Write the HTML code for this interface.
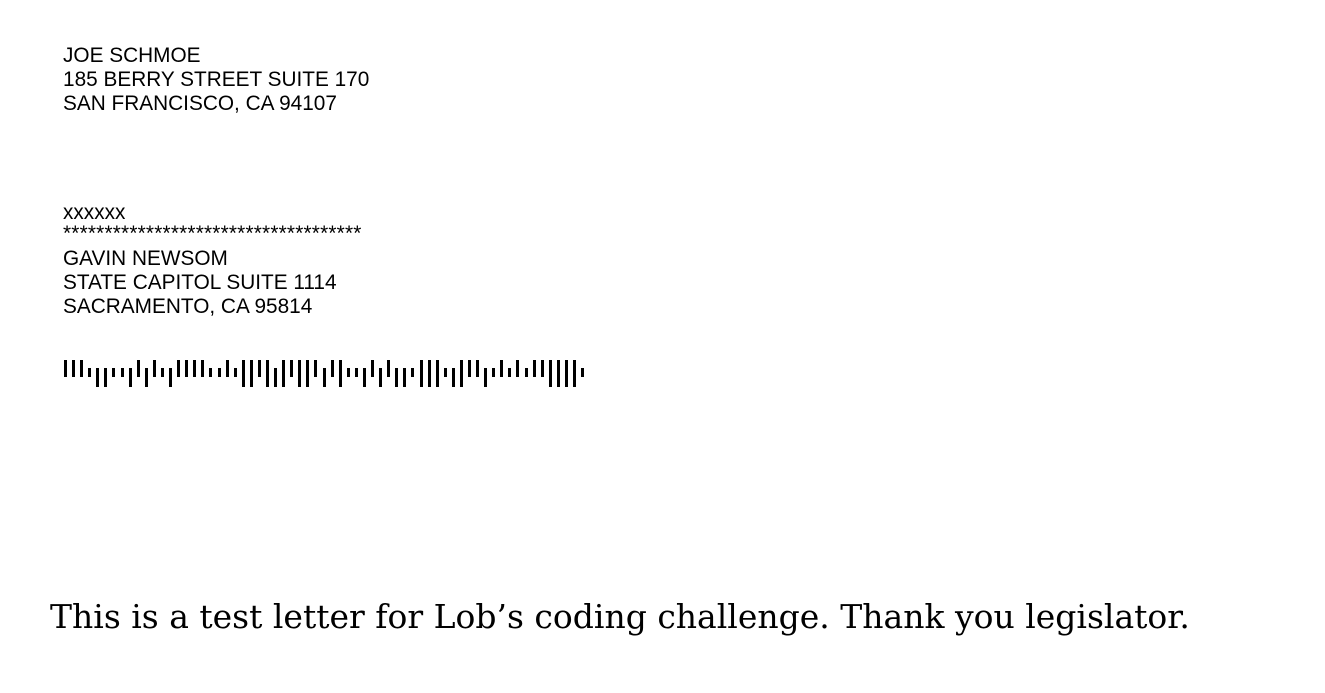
<!DOCTYPE html>
<html><head><style>
body{margin:0;width:1325px;height:693px;background:#fff;position:relative;overflow:hidden;font-family:"Liberation Sans",sans-serif;color:#000}
.t{position:absolute;left:63px;font-size:20.8px;line-height:24px;white-space:pre}
.s{position:absolute;left:50px;top:597px;font-family:"DejaVu Serif",serif;font-size:33px;white-space:nowrap}
.b{position:absolute;width:3px;background:#000}
</style></head><body>
<div class="t" style="top:44px">JOE SCHMOE
185 BERRY STREET SUITE 170
SAN FRANCISCO, CA 94107</div>
<div class="t" style="top:201px;line-height:24px">xxxxxx</div>
<div class="t" style="top:222px;line-height:24px;letter-spacing:0.2px">************************************</div>
<div class="t" style="top:247px">GAVIN NEWSOM
STATE CAPITOL SUITE 1114
SACRAMENTO, CA 95814</div>
<div id="bc"></div>
<div class="s">This is a test letter for Lob’s coding challenge. Thank you legislator.</div>
<script>
var seq="AAATDDTTDADATDAAAATTATFFAFDFAFFADAFTTDADADDTFFFTDFAADTATATAAFFFFT";
var h="";
for(var i=0;i<seq.length;i++){var x=Math.round(64+i*8.08),c=seq[i],t,b;
if(c=="F"){t=360;b=387}else if(c=="A"){t=360;b=377}else if(c=="D"){t=368;b=387}else{t=368;b=377}
h+='<div class="b" style="left:'+x+'px;top:'+t+'px;height:'+(b-t)+'px"></div>';}
document.getElementById("bc").innerHTML=h;
</script>
</body></html>
